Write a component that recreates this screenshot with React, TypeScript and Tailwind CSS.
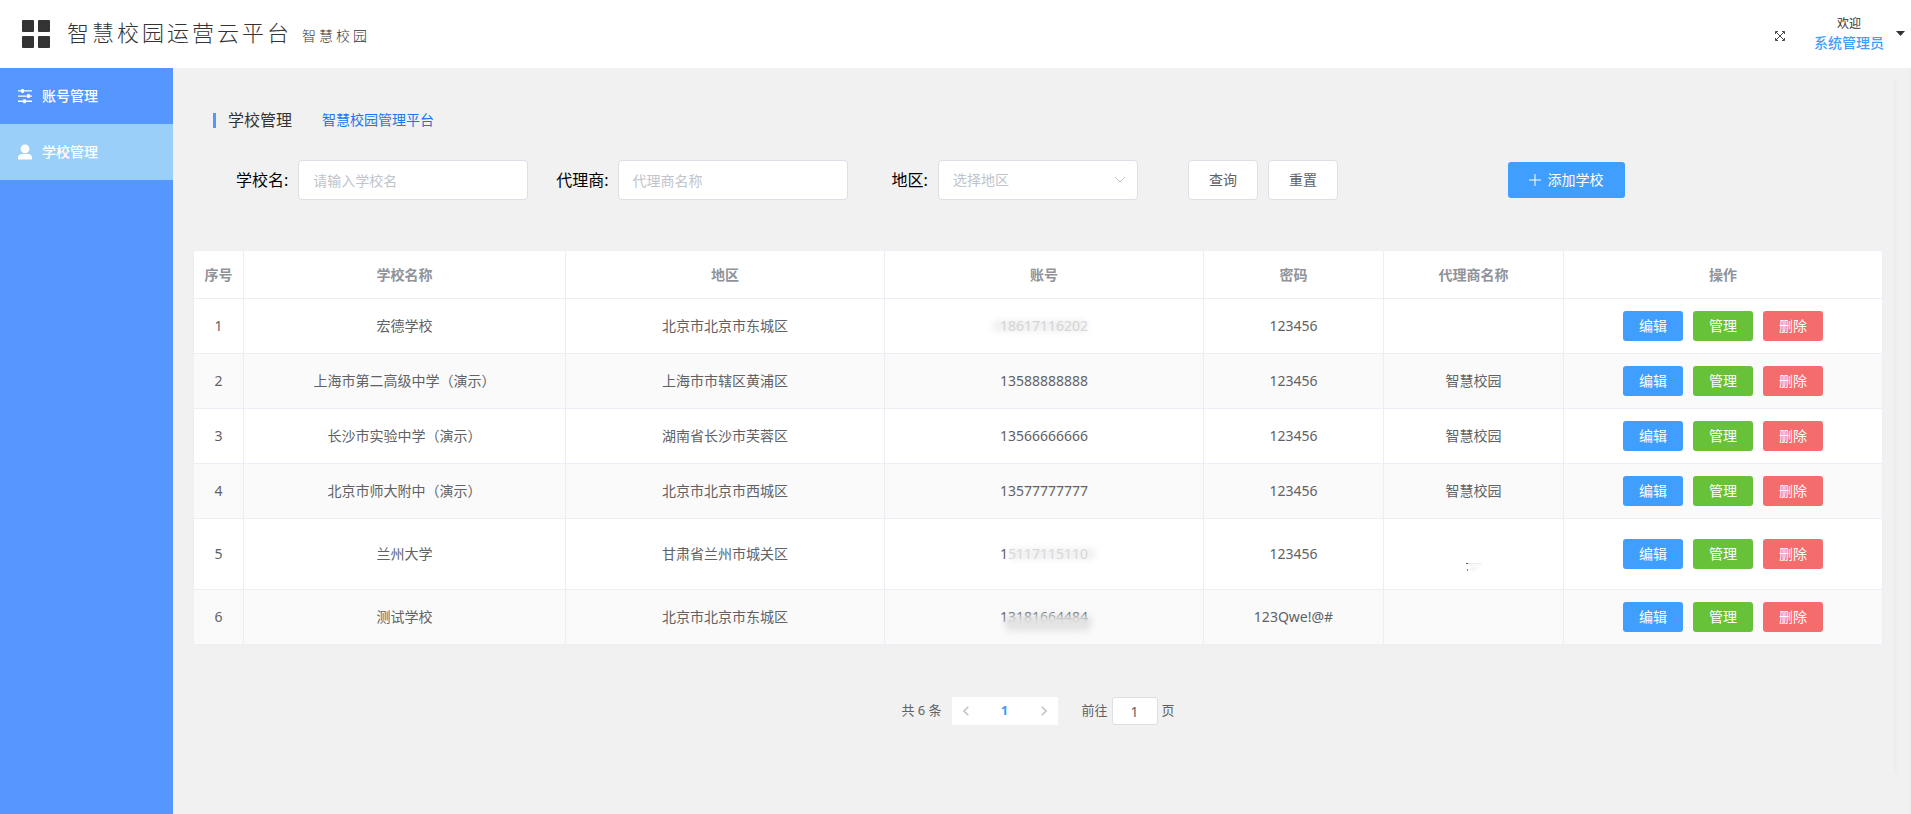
import clsx from "clsx";
import { useState } from "react";

// school list shown in the table
const schoolList = [
  { name: "宏德学校", area: "北京市北京市东城区", account: "18617116202", password: "123456", agent: "", mask: "full" },
  { name: "上海市第二高级中学（演示）", area: "上海市市辖区黄浦区", account: "13588888888", password: "123456", agent: "智慧校园" },
  { name: "长沙市实验中学（演示）", area: "湖南省长沙市芙蓉区", account: "13566666666", password: "123456", agent: "智慧校园" },
  { name: "北京市师大附中（演示）", area: "北京市北京市西城区", account: "13577777777", password: "123456", agent: "智慧校园" },
  { name: "兰州大学", area: "甘肃省兰州市城关区", account: "15117115110", password: "123456", agent: "", mask: "tail", tall: true },
  { name: "测试学校", area: "北京市北京市东城区", account: "13181664484", password: "123Qwe!@#", agent: "", mask: "bottom" },
];

const menuList = [
  { name: "账号管理", icon: "setting" },
  { name: "学校管理", icon: "user" },
];

const MenuIcon = ({ icon }: any) => {
  if (icon === "user") {
    return (
      <svg width="16" height="16" viewBox="0 0 16 16" fill="currentColor">
        <circle cx="8" cy="4.8" r="4.4" />
        <path d="M1 15.6v-2.1C1 11.2 3 10 5 10h6c2 0 4 1.2 4 3.5v2.1z" />
      </svg>
    );
  }
  return (
    <svg width="16" height="16" viewBox="0 0 16 16" fill="currentColor">
      <path d="M1 2.2h14v1.4H1zM1 7.4h14v1.4H1zM1 12.6h14V14H1z" />
      <rect x="4" y="1" width="3" height="4" rx="1" />
      <rect x="10" y="6.1" width="3" height="4" rx="1" />
      <rect x="6" y="11.3" width="3" height="4" rx="1" />
    </svg>
  );
};

const Header = () => {
  return (
    <header className="flex h-17 items-center bg-white pl-[22px] pr-[6px] text-[#333]">
      <svg width="28" height="28" viewBox="0 0 28 28" fill="currentColor">
        <rect x="0" y="0" width="12" height="12" rx="1" />
        <rect x="16" y="0" width="12" height="12" rx="1" />
        <rect x="0" y="16" width="12" height="12" rx="1" />
        <rect x="16" y="16" width="12" height="12" rx="1" />
      </svg>
      <div className="mb-1 ml-[17px] flex items-baseline gap-[10px] font-light tracking-[3px]">
        <h1 className="text-[22px]">智慧校园运营云平台</h1>
        <span className="text-sm">智慧校园</span>
      </div>

      <div className="ml-auto flex items-center">
        <button type="button" aria-label="全屏" className="mt-1">
          <svg width="10" height="10" viewBox="0 0 10 10" fill="none" stroke="currentColor">
            <path d="M1 1l8 8M9 1l-8 8M.5 3V.5H3M7 .5h2.5V3M9.5 7v2.5H7M3 9.5H.5V7" strokeWidth="0.9" />
          </svg>
        </button>
        <button type="button" className="mb-[2px] ml-[29px] flex items-center gap-3">
          <span className="flex flex-col items-center">
            <span className="text-xs leading-5">欢迎</span>
            <span className="text-sm leading-[18px] font-medium text-[#409eff]">系统管理员</span>
          </span>
          <svg width="9" height="5" viewBox="0 0 9 5" fill="currentColor">
            <path d="M0 0h9L4.5 5z" />
          </svg>
        </button>
      </div>
    </header>
  );
};

const Account = ({ item }: any) => {
  if (!item.mask) return item.account;

  return (
    <span className={clsx("relative inline-block", item.mask === "full" && "text-[#dcdcde]")}>
      {item.mask === "tail" && (
        <>
          1<span className="text-[#e0e0e2]">{item.account.slice(1)}</span>
        </>
      )}
      {item.mask !== "tail" && item.account}
      {item.mask === "full" && (
        <span className="absolute inset-y-1 -left-2 right-0 rounded-full bg-neutral-400/15 blur-[3px]" />
      )}
      {item.mask === "tail" && (
        <span className="absolute top-1 bottom-1 left-2 -right-2 rounded-full bg-neutral-400/15 blur-[3px]" />
      )}
      {item.mask === "bottom" && (
        <span className="absolute top-2 -bottom-1 left-1 -right-1 rounded-full bg-[#e2e2e2]/95 blur-[3px]" />
      )}
    </span>
  );
};

const SchoolTable = () => {
  const th = "h-12 border border-[#ebeef5] font-bold";
  const td = "border border-[#ebeef5]";
  const btn = "h-[30px] w-15 rounded-[3px] text-sm text-white";

  return (
    <table className="mt-[50px] w-full table-fixed border-collapse bg-white text-center text-sm text-[#606266]">
      <thead className="text-[#909399]">
        <tr>
          <th className={clsx(th, "w-[50px]")}>序号</th>
          <th className={clsx(th, "w-[322px]")}>学校名称</th>
          <th className={th}>地区</th>
          <th className={th}>账号</th>
          <th className={clsx(th, "w-[180px]")}>密码</th>
          <th className={clsx(th, "w-[180px]")}>代理商名称</th>
          <th className={th}>操作</th>
        </tr>
      </thead>
      <tbody>
        {schoolList.map((item, i) => (
          <tr key={i} className={clsx(item.tall ? "h-[71px]" : "h-[55px]", i % 2 === 1 && "bg-[#fafafa]")}>
            <td className={td}>{i + 1}</td>
            <td className={td}>{item.name}</td>
            <td className={td}>{item.area}</td>
            <td className={td}>
              <Account item={item} />
            </td>
            <td className={td}>{item.password}</td>
            <td className={td}>
              {item.tall ? (
                <svg width="20" height="14" viewBox="0 0 20 14" className="mx-auto mt-7">
                  <path d="M5 2h13l-8 10z" fill="#f9f9f9" />
                  <path d="M4 2.5h13M6 8.500h4" stroke="#ececec" />
                  <path d="M2 2.5h2" stroke="#555" />
                  <path d="M3.5 8v2" stroke="#b5705c" />
                </svg>
              ) : (
                item.agent
              )}
            </td>
            <td className={td}>
              <div className="flex justify-center gap-[10px]">
                <button type="button" className={clsx(btn, "bg-[#409eff]")}>编辑</button>
                <button type="button" className={clsx(btn, "bg-[#67c23a]")}>管理</button>
                <button type="button" className={clsx(btn, "bg-[#f56c6c]")}>删除</button>
              </div>
            </td>
          </tr>
        ))}
      </tbody>
    </table>
  );
};

const Pagination = () => {
  const [page, setPage] = useState("1");

  return (
    <div className="mt-[52px] flex h-7 items-center justify-center text-[13px] text-[#606266]">
      <span>共 6 条</span>
      <div className="ml-[10px] flex h-7 items-center bg-white">
        <button type="button" aria-label="上一页" className="flex w-7 justify-center">
          <svg width="6" height="10" viewBox="0 0 6 10" fill="none" stroke="#c0c4cc" strokeWidth="1.6">
            <path d="M5.3 .7L1 5l4.3 4.3" />
          </svg>
        </button>
        <button type="button" className="w-[50px] font-bold text-[#409eff]">1</button>
        <button type="button" aria-label="下一页" className="flex w-7 justify-center">
          <svg width="6" height="10" viewBox="0 0 6 10" fill="none" stroke="#c0c4cc" strokeWidth="1.6">
            <path d="M.7 .7L5 5 .7 9.300" />
          </svg>
        </button>
      </div>
      <label htmlFor="page" className="ml-6">前往</label>
      <input
        id="page"
        value={page}
        onChange={(e) => setPage(e.target.value)}
        className="mx-1 h-7 w-[46px] rounded-[3px] border border-[#dcdfe6] bg-white text-center text-sm"
      />
      <span>页</span>
    </div>
  );
};

const App = () => {
  const [active, setActive] = useState(1);

  const field = "h-10 rounded border border-[#dcdfe6] bg-white px-[14px] text-sm placeholder:text-[#c0c4cc]";
  const plainBtn = "h-10 w-[70px] rounded border border-[#dcdfe6] bg-white text-sm text-[#606266]";

  return (
    <div className="flex min-h-screen flex-col bg-[#f1f1f1] font-['Noto_Sans','Noto_Sans_CJK_SC',sans-serif]">
      <Header />
      <div className="flex grow">
        {/* side menu */}
        <nav className="w-[173px] shrink-0 bg-[#5696ff]">
          {menuList.map((item, i) => (
            <a
              key={item.name}
              href="#"
              onClick={() => setActive(i)}
              className={clsx(
                "flex h-14 items-center gap-[9px] pl-[17px] text-sm font-medium text-white",
                active === i && "bg-[#9acffa]"
              )}
            >
              <MenuIcon icon={item.icon} />
              {item.name}
            </a>
          ))}
        </nav>

        <main className="min-w-0 grow pt-[38px] pr-[10px] pl-5">
          <div className="flex h-7 items-center pl-5">
            <span className="h-[15px] w-[3px] bg-[#5696ff]" />
            <h2 className="ml-3 text-base text-[#333]">学校管理</h2>
            <a href="#" className="ml-[30px] text-sm text-[#1f74f0]">智慧校园管理平台</a>
          </div>

          {/* search bar */}
          <form className="mt-[26px] flex items-center pl-[43px] text-base text-black">
            <label htmlFor="school">学校名:</label>
            <input id="school" placeholder="请输入学校名" className={clsx(field, "ml-[10px] w-[230px]")} />
            <label htmlFor="agent" className="ml-7">代理商:</label>
            <input id="agent" placeholder="代理商名称" className={clsx(field, "ml-[9px] w-[230px]")} />
            <label htmlFor="area" className="ml-11">地区:</label>
            <div className="relative ml-[10px]">
              <select id="area" className={clsx(field, "w-[200px] appearance-none text-[#c0c4cc]")}>
                <option>选择地区</option>
              </select>
              <svg
                width="12"
                height="8"
                viewBox="0 0 12 8"
                fill="none"
                stroke="#c0c4cc"
                className="pointer-events-none absolute top-4 right-3"
              >
                <path d="M1 1l5 5 5-5" />
              </svg>
            </div>
            <button type="button" className={clsx(plainBtn, "ml-[50px]")}>查询</button>
            <button type="button" className={clsx(plainBtn, "ml-[10px]")}>重置</button>
            <button
              type="button"
              className="ml-[170px] flex h-9 w-[117px] items-center justify-center gap-[6px] rounded-[3px] bg-[#409eff] text-sm text-white"
            >
              <svg width="12" height="12" viewBox="0 0 12 12" stroke="currentColor">
                <path d="M6 0v12M0 6h12" />
              </svg>
              添加学校
            </button>
          </form>

          <SchoolTable />
          <Pagination />
        </main>

        {/* scroll track */}
        <div className="mt-[11px] mr-[11px] mb-10 w-[5px] shrink-0 bg-[#eeeeee]" />
        <div className="w-[2px] shrink-0 bg-[#eeeeee]" />
      </div>
    </div>
  );
};

export default App;
